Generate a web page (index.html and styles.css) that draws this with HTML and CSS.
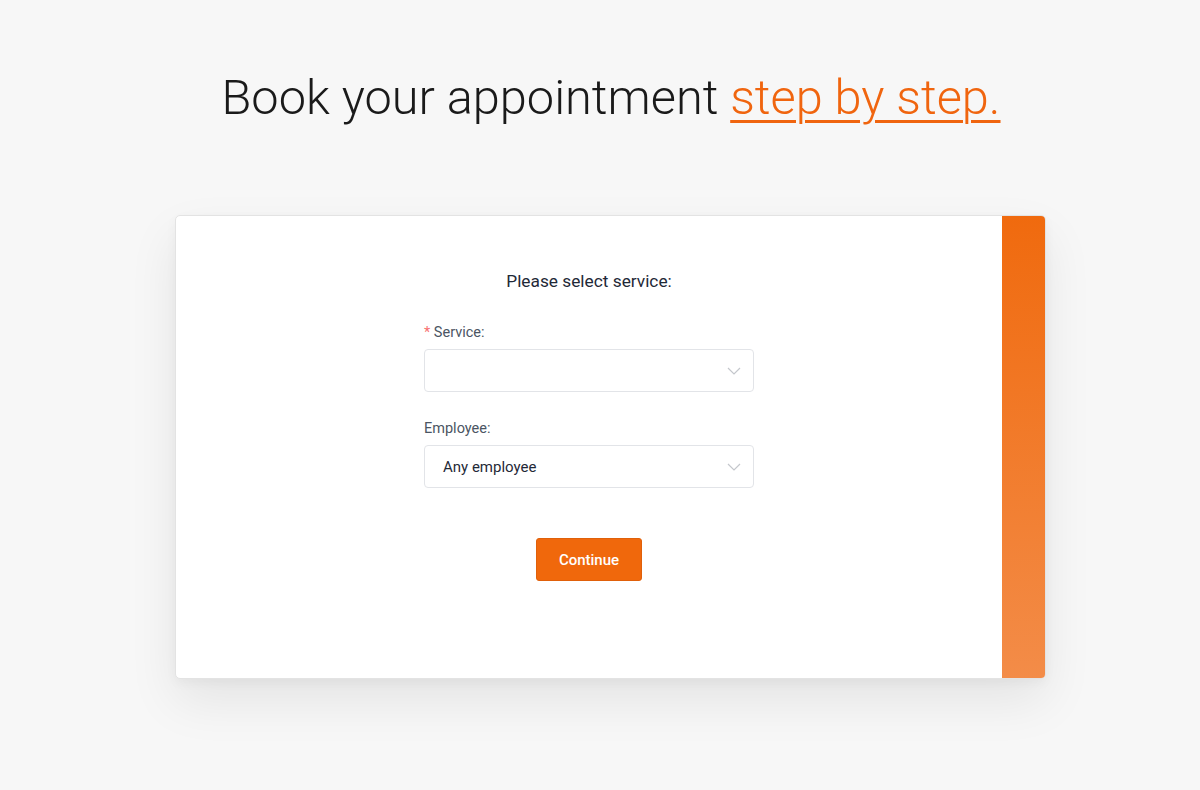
FILE: index.html
```html
<!DOCTYPE html>
<html lang="en">
<head>
<meta charset="utf-8">
<title>Book your appointment</title>
<link rel="stylesheet" href="styles.css">
</head>
<body>
<div class="page">
  <h1 class="title">Book your appointment <a class="accent" href="#">step by step.</a></h1>
  <div class="card">
    <div class="card-main">
      <div class="form">
        <div class="heading">Please select service:</div>
        <div class="field">
          <label class="label"><span class="req">*</span> Service:</label>
          <div class="select">
            <span class="value"></span>
            <svg class="chev" width="14" height="8" viewBox="0 0 14 8"><path d="M1 1l6 6 6-6" fill="none" stroke="#c4c7cc" stroke-width="1.2"/></svg>
          </div>
        </div>
        <div class="field">
          <label class="label">Employee:</label>
          <div class="select">
            <span class="value">Any employee</span>
            <svg class="chev" width="14" height="8" viewBox="0 0 14 8"><path d="M1 1l6 6 6-6" fill="none" stroke="#c4c7cc" stroke-width="1.2"/></svg>
          </div>
        </div>
        <div class="actions">
          <button class="btn" type="button">Continue</button>
        </div>
      </div>
    </div>
    <div class="card-side"></div>
  </div>
</div>
</body>
</html>
```
FILE: styles.css
```css
html, body {
  margin: 0;
  padding: 0;
}
body {
  background: #f7f7f7;
  font-family: Roboto, "Liberation Sans", Arial, sans-serif;
  color: #1f2937;
}
.page {
  display: flex;
  flex-direction: column;
  align-items: center;
  padding: 64px 0 110px 21px;
}
.title {
  margin: 0;
  font-weight: 300;
  font-size: 48.7px;
  line-height: 68px;
  color: #1a1a1a;
  padding-left: 1px;
}
.accent {
  color: #f0650f;
  text-decoration: underline;
  text-decoration-thickness: 3px;
  text-underline-offset: 6px;
}
.card {
  margin-top: 83px;
  width: 871px;
  height: 464px;
  box-sizing: border-box;
  display: flex;
  background: #fff;
  border: 1px solid #e3e3e3;
  border-radius: 5px;
  box-shadow: 0 22px 50px rgba(0,0,0,0.08), 0 4px 12px rgba(0,0,0,0.04);
  overflow: hidden;
}
.card-main {
  flex: 1;
  display: flex;
  justify-content: center;
  padding-top: 54px;
}
.card-side {
  width: 43px;
  background: linear-gradient(180deg, #f06a0e 0%, #f38c48 100%);
}
.form {
  width: 330px;
  display: flex;
  flex-direction: column;
}
.heading {
  text-align: center;
  font-size: 17.3px;
  line-height: 22px;
  color: #1f2937;
  margin-bottom: 31px;
}
.field {
  display: flex;
  flex-direction: column;
  margin-bottom: 27px;
}
.label {
  font-size: 14.5px;
  line-height: 20px;
  color: #4b5563;
  margin-bottom: 6px;
}
.req {
  color: #f87171;
}
.select {
  height: 43px;
  box-sizing: border-box;
  border: 1px solid #e2e4e8;
  border-radius: 4px;
  display: flex;
  align-items: center;
  justify-content: space-between;
  padding: 0 12px 0 18px;
  background: #fff;
}
.value {
  font-size: 15px;
  color: #1f2937;
}
.chev {
  display: block;
}
.actions {
  display: flex;
  justify-content: center;
  margin-top: 23px;
}
.btn {
  width: 106px;
  height: 43px;
  border: 1px solid #e0600a;
  border-radius: 3px;
  background: #f0680c;
  color: #fff;
  font-family: Roboto, "Liberation Sans", Arial, sans-serif;
  font-weight: 500;
  font-size: 15px;
  cursor: pointer;
}
```
